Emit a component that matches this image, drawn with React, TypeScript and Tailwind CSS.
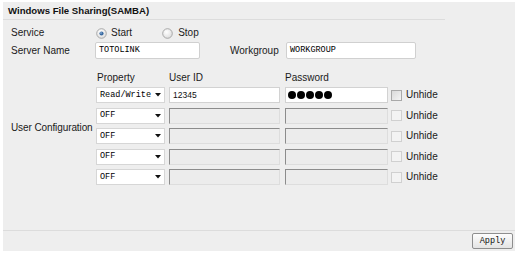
import React from "react";

const sans = "font-['Liberation_Sans',Arial,sans-serif]";
const mono = "font-['Liberation_Mono','Courier_New',monospace]";

function Radio({ checked }: { checked?: boolean }) {
  return (
    <svg width="11" height="11" viewBox="0 0 11 11" className="shrink-0">
      <defs>
        <radialGradient id={checked ? "rg1" : "rg2"} cx="0.4" cy="0.35" r="0.7">
          <stop offset="0" stopColor="#ffffff" />
          <stop offset="1" stopColor="#dcdcdc" />
        </radialGradient>
      </defs>
      <circle cx="5.5" cy="5.5" r="4.8" fill={`url(#${checked ? "rg1" : "rg2"})`} stroke="#a2a2a2" strokeWidth="0.9" />
      {checked && <circle cx="5.5" cy="5.5" r="2.1" fill="#3a6aa0" />}
      {checked && <circle cx="5" cy="5" r="0.8" fill="#9cc0e6" />}
    </svg>
  );
}

function Sel({ v }: { v: string }) {
  return (
    <div className="w-[69px] h-[16px] bg-white border border-[#d6d6d6] flex items-center justify-between pl-[3px] pr-[3px] shrink-0">
      <span className={`${mono} text-[8.5px] leading-none text-[#000]`}>{v}</span>
      <svg width="6" height="4" viewBox="0 0 6 4">
        <path d="M0 0H6L3 3.5Z" fill="#111" />
      </svg>
    </div>
  );
}

function Disabled({ w }: { w: string }) {
  return (
    <div
      className={`${w} h-[16px] bg-[#ececec] border border-[#dddddd] border-t-[#8c8c8c] border-l-[#8c8c8c] shrink-0`}
    />
  );
}

function Check({ enabled }: { enabled?: boolean }) {
  return (
    <div
      className={
        enabled
          ? "w-[11px] h-[11px] border border-[#a9a9a9] bg-gradient-to-br from-[#dadada] to-[#f4f4f4] shrink-0"
          : "w-[11px] h-[11px] border border-[#d0d0d0] bg-[#f3f3f3] shrink-0"
      }
    />
  );
}

function UserRow({ first }: { first?: boolean }) {
  return (
    <div className="flex items-center h-[16px] ml-[1px]">
      <Sel v={first ? "Read/Write" : "OFF"} />
      {first ? (
        <div className="ml-[4px] w-[111px] h-[16px] bg-white border border-[#d2d2d2] flex items-center pl-[3px] shrink-0">
          <span className={`${sans} text-[8.5px] leading-none text-[#111]`}>12345</span>
        </div>
      ) : (
        <div className="ml-[4px]">
          <Disabled w="w-[111px]" />
        </div>
      )}
      {first ? (
        <div className="ml-[5px] w-[103px] h-[16px] bg-white border border-[#d2d2d2] flex items-center pl-[2px] gap-[1px] shrink-0">
          {[0, 1, 2, 3, 4].map((i) => (
            <span key={i} className="w-[8px] h-[8px] rounded-full bg-black" />
          ))}
        </div>
      ) : (
        <div className="ml-[5px]">
          <Disabled w="w-[103px]" />
        </div>
      )}
      <div className="ml-[3px]">
        <Check enabled={first} />
      </div>
      <span className={`${sans} text-[10px] leading-none text-[#1a1a1a] ml-[4px]`}>Unhide</span>
    </div>
  );
}

export default function App() {
  return (
    <div className="w-[524px] h-[258px] bg-white pt-[2px] pl-[3px]">
      <div className={`w-[512px] h-[249px] bg-[#eeeeee] flex flex-col ${sans} text-[#1a1a1a]`}>
        {/* header */}
        <div className="w-[442px] h-[18px] border-b border-[#dcdcdc] flex items-center pl-[5px]">
          <span className="font-bold text-[9.6px] leading-none text-[#111]">Windows File Sharing(SAMBA)</span>
        </div>

        <div className="pl-[8px] flex flex-col">
          {/* Service */}
          <div className="flex items-center h-[16px] mt-[5px]">
            <div className="w-[84px] text-[10px] leading-none">Service</div>
            <div className="flex items-center ml-[1px]">
              <Radio checked />
              <span className="text-[10px] leading-none ml-[4px]">Start</span>
            </div>
            <div className="flex items-center ml-[30px]">
              <Radio />
              <span className="text-[10px] leading-none ml-[5px]">Stop</span>
            </div>
          </div>

          {/* Server Name */}
          <div className="flex items-center h-[17px] mt-[1px]">
            <div className="w-[84px] text-[10px] leading-none">Server Name</div>
            <div className="w-[105px] h-[17px] bg-white border border-[#d0d0d0] rounded-[2px] flex items-center pl-[3px]">
              <span className={`${mono} text-[8.5px] leading-none text-[#000]`}>TOTOLINK</span>
            </div>
            <div className="ml-[30px] w-[56px] text-[10px] leading-none">Workgroup</div>
            <div className="w-[130px] h-[17px] bg-white border border-[#d0d0d0] rounded-[2px] flex items-center pl-[3px]">
              <span className={`${mono} text-[8.5px] leading-none text-[#000]`}>WORKGROUP</span>
            </div>
          </div>

          {/* User configuration */}
          <div className="flex items-center mt-[12px]">
            <div className="w-[84px] text-[10px] tracking-[-0.1px] leading-none whitespace-nowrap">User Configuration</div>
            <div className="flex flex-col">
              <div className="flex items-center h-[14px] text-[10px] leading-none">
                <span className="ml-[2px] w-[72px]">Property</span>
                <span className="w-[116px]">User ID</span>
                <span>Password</span>
              </div>
              <div className="flex flex-col gap-[4.5px] mt-[2px]">
                <UserRow first />
                <UserRow />
                <UserRow />
                <UserRow />
                <UserRow />
              </div>
            </div>
          </div>
        </div>

        {/* footer */}
        <div className="mt-auto h-[21px] border-t border-[#dcdcdc] flex justify-end items-start pt-[2px] pr-[2px]">
          <button className="w-[41px] h-[16px] border border-[#8e8e8e] rounded-[2px] bg-gradient-to-b from-[#fdfdfd] to-[#e4e4e4] flex items-center justify-center">
            <span className={`${mono} text-[8.5px] leading-none text-[#111]`}>Apply</span>
          </button>
        </div>
      </div>
    </div>
  );
}
